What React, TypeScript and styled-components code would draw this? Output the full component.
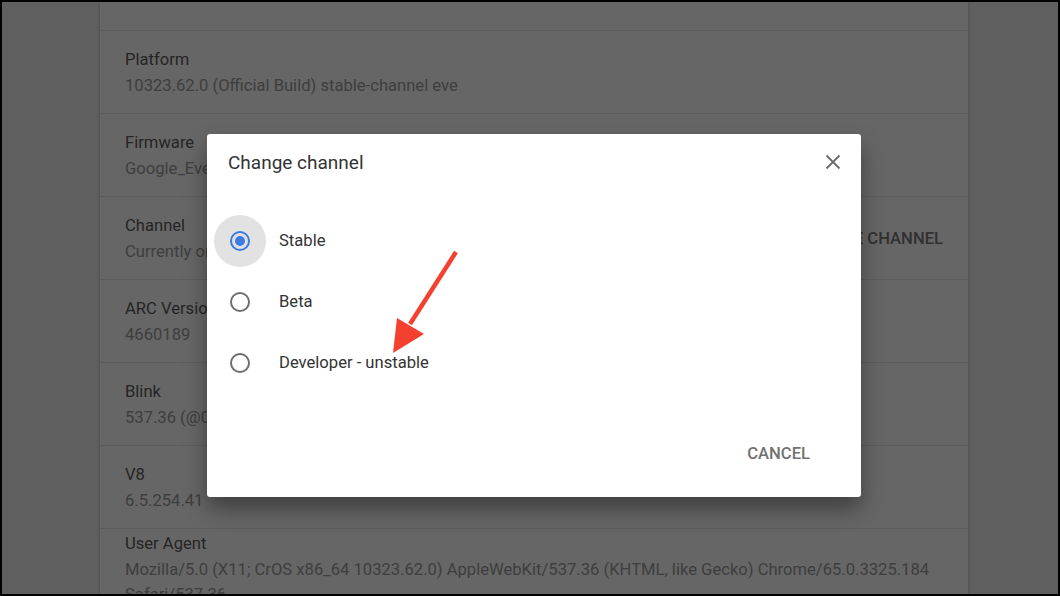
import styled, { createGlobalStyle } from "styled-components";

const GlobalStyle = createGlobalStyle`
  html, body {
    margin: 0;
    padding: 0;
    background: #000;
  }
  * {
    box-sizing: border-box;
  }
`;

const Screen = styled.div`
  position: relative;
  width: 1060px;
  height: 596px;
  border: 2px solid #000;
  background: #eeeeee;
  overflow: hidden;
  font-family: Roboto, "Liberation Sans", sans-serif;
`;

const Card = styled.div`
  width: 868px;
  margin-left: 98px;
  background: #fff;
  box-shadow: 0 0 3px rgba(0, 0, 0, 0.25);
`;

const TopGap = styled.div`
  height: 28px;
`;

const Row = styled.div<{ $tight?: boolean }>`
  display: flex;
  align-items: ${({ $tight }) => ($tight ? "flex-start" : "center")};
  justify-content: space-between;
  min-height: 83px;
  padding: ${({ $tight }) => ($tight ? "2px 25px 0" : "0 25px")};
  border-top: 1px solid #e6e6e6;
`;

const RowText = styled.div`
  display: flex;
  flex-direction: column;
`;

const Label = styled.span`
  font-size: 16.6px;
  line-height: 26px;
  color: #5c5c5c;
`;

const Value = styled.span`
  font-size: 16.6px;
  line-height: 25px;
  color: #9c9c9c;
`;

const LinkButton = styled.span`
  font-size: 16.6px;
  font-weight: 500;
  color: #7a7a7a;
  text-transform: uppercase;
`;

const Scrim = styled.div`
  position: absolute;
  inset: 0;
  background: rgba(0, 0, 0, 0.6);
`;

const Dialog = styled.div`
  position: absolute;
  left: 205px;
  top: 132px;
  width: 654px;
  height: 363px;
  display: flex;
  flex-direction: column;
  background: #fff;
  border-radius: 3px;
  box-shadow: 0 12px 22px rgba(0, 0, 0, 0.38);
`;

const DialogHeader = styled.div`
  display: flex;
  align-items: center;
  justify-content: space-between;
  height: 56px;
  padding: 0 16px 0 21px;
`;

const DialogTitle = styled.h2`
  margin: 0;
  font-size: 19px;
  font-weight: 400;
  color: #333;
`;

const CloseButton = styled.button`
  display: flex;
  align-items: center;
  justify-content: center;
  width: 24px;
  height: 24px;
  padding: 0;
  border: none;
  background: none;
  cursor: pointer;
`;

const OptionList = styled.div`
  display: flex;
  flex-direction: column;
  margin-top: 20px;
  padding-left: 7px;
`;

const Option = styled.label`
  display: flex;
  align-items: center;
  gap: 13px;
  height: 61px;
  font-size: 16.6px;
  color: #333;
  cursor: pointer;
`;

const RadioHalo = styled.span<{ $focused?: boolean }>`
  display: flex;
  align-items: center;
  justify-content: center;
  width: 52px;
  height: 52px;
  border-radius: 50%;
  background: ${({ $focused }) => ($focused ? "#e2e2e2" : "transparent")};
`;

const Radio = styled.span<{ $checked?: boolean }>`
  display: flex;
  align-items: center;
  justify-content: center;
  width: 20px;
  height: 20px;
  border-radius: 50%;
  border: 2px solid ${({ $checked }) => ($checked ? "#3d7be2" : "#6e6e6e")};

  &::after {
    content: "";
    width: 10px;
    height: 10px;
    border-radius: 50%;
    background: ${({ $checked }) => ($checked ? "#3d7be2" : "transparent")};
  }
`;

const DialogFooter = styled.div`
  display: flex;
  justify-content: flex-end;
  margin-top: auto;
  padding: 0 35px 26px 0;
`;

const TextButton = styled.button`
  height: 36px;
  padding: 0 16px;
  border: none;
  background: none;
  font-family: inherit;
  font-size: 16.6px;
  font-weight: 500;
  color: #727272;
  cursor: pointer;
`;

const Annotation = styled.svg`
  position: absolute;
  left: 0;
  top: 0;
  pointer-events: none;
`;

const rows = [
  { label: "Platform", value: "10323.62.0 (Official Build) stable-channel eve" },
  { label: "Firmware", value: "Google_Eve.9584.107.0" },
  { label: "Channel", value: "Currently on stable", action: "Change channel" },
  { label: "ARC Version", value: "4660189" },
  { label: "Blink", value: "537.36 (@0f1f3b4bc1e96e9c8b7c2b1a76fb8b2e3a4c6d7e)" },
  { label: "V8", value: "6.5.254.41" },
];

const channels = [
  { name: "Stable", checked: true },
  { name: "Beta", checked: false },
  { name: "Developer - unstable", checked: false },
];

function App() {
  return (
    <>
      <GlobalStyle />
      <Screen>
        <Card>
          <TopGap />
          {rows.map((row) => (
            <Row key={row.label}>
              <RowText>
                <Label>{row.label}</Label>
                <Value>{row.value}</Value>
              </RowText>
              {row.action && <LinkButton>{row.action}</LinkButton>}
            </Row>
          ))}
          <Row $tight>
            <RowText>
              <Label>User Agent</Label>
              <Value>
                Mozilla/5.0 (X11; CrOS x86_64 10323.62.0) AppleWebKit/537.36
                (KHTML, like Gecko) Chrome/65.0.3325.184 Safari/537.36
              </Value>
            </RowText>
          </Row>
        </Card>

        <Scrim />

        <Dialog role="dialog">
          <DialogHeader>
            <DialogTitle>Change channel</DialogTitle>
            <CloseButton aria-label="Close">
              <svg width="16" height="16" viewBox="0 0 16 16">
                <path
                  d="M1.5 1.5 14.5 14.5M14.5 1.5 1.5 14.5"
                  stroke="#6b6b6b"
                  strokeWidth="1.8"
                  fill="none"
                />
              </svg>
            </CloseButton>
          </DialogHeader>
          <OptionList>
            {channels.map((c) => (
              <Option key={c.name}>
                <RadioHalo $focused={c.checked}>
                  <Radio $checked={c.checked} />
                </RadioHalo>
                {c.name}
              </Option>
            ))}
          </OptionList>
          <DialogFooter>
            <TextButton>CANCEL</TextButton>
          </DialogFooter>
        </Dialog>

        <Annotation width="1056" height="592" viewBox="2 2 1056 592">
          <line
            x1="456"
            y1="252"
            x2="410"
            y2="324"
            stroke="#f4412f"
            strokeWidth="4.5"
          />
          <polygon points="397,318 424,334 393,353" fill="#f4412f" />
        </Annotation>
      </Screen>
    </>
  );
}

export default App;
